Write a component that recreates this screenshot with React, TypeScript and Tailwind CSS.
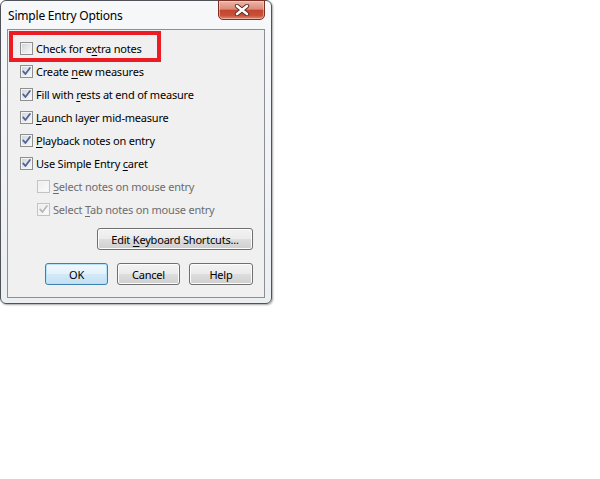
import React, { useId } from 'react';

type BoxProps = { checked?: boolean; disabled?: boolean };

const CheckBox: React.FC<BoxProps> = ({ checked, disabled }) => {
  const id = useId();
  const border = disabled ? '#c3c3c3' : '#8e8f8f';
  const tick = disabled ? '#b8b8b8' : '#4f6496';
  return (
    <svg width="13" height="13" viewBox="0 0 13 13" className="shrink-0">
      <defs>
        <linearGradient id={id} x1="0" y1="0" x2="1" y2="1">
          <stop offset="0" stopColor={disabled ? '#ededed' : '#d2d6dc'} />
          <stop offset="1" stopColor={disabled ? '#fbfbfb' : '#f8f8f8'} />
        </linearGradient>
      </defs>
      <rect x="0.5" y="0.5" width="12" height="12" fill="#f4f4f4" stroke={border} />
      <rect x="2" y="2" width="9" height="9" fill={`url(#${id})`} />
      {checked && (
        <path d="M3.2 6.4 L5.4 9 L9.9 3" fill="none" stroke={tick} strokeWidth="1.8" strokeLinecap="round" strokeLinejoin="round" />
      )}
    </svg>
  );
};

type RowProps = BoxProps & { pre: string; key_: string; post: string; indent?: boolean };

const Row: React.FC<RowProps> = ({ checked, disabled, pre, key_, post, indent }) => (
  <div className={`flex h-[23px] items-center gap-[3px] ${indent ? 'pl-[17px]' : ''}`}>
    <CheckBox checked={checked} disabled={disabled} />
    <span className={`whitespace-nowrap ${disabled ? 'text-[#6d6d6d]' : 'text-black'}`}>
      {pre}
      <u className="underline-offset-[2px]">{key_}</u>
      {post}
    </span>
  </div>
);

const Button: React.FC<{ children: React.ReactNode; def?: boolean; className?: string }> = ({ children, def, className }) => (
  <div
    className={`flex h-[22px] items-center justify-center rounded-[3px] border text-black ${
      def
        ? 'border-[#3c7fb1] bg-[linear-gradient(180deg,#f0f8fd_0%,#e4f2fa_48%,#d3e9f7_52%,#c4e0f3_100%)] shadow-[inset_0_0_0_1px_#b6e3f8]'
        : 'border-[#707070] bg-[linear-gradient(180deg,#f3f3f3_0%,#ebebeb_48%,#dddddd_52%,#cfcfcf_100%)] shadow-[inset_0_0_0_1px_#fcfcfc]'
    } ${className ?? ''}`}
  >
    {children}
  </div>
);

const rows: RowProps[] = [
  { checked: false, pre: 'Check for e', key_: 'x', post: 'tra notes' },
  { checked: true, pre: 'Create ', key_: 'n', post: 'ew measures' },
  { checked: true, pre: 'Fill with ', key_: 'r', post: 'ests at end of measure' },
  { checked: true, pre: '', key_: 'L', post: 'aunch layer mid-measure' },
  { checked: true, pre: '', key_: 'P', post: 'layback notes on entry' },
  { checked: true, pre: 'Use Simple Entry ', key_: 'c', post: 'aret' },
  { checked: false, disabled: true, indent: true, pre: '', key_: 'S', post: 'elect notes on mouse entry' },
  { checked: true, disabled: true, indent: true, pre: 'Select ', key_: 'T', post: 'ab notes on mouse entry' },
];

export default function App() {
  return (
    <div className="h-[479px] w-[600px] bg-white font-['Noto_Sans',sans-serif] text-[11px] leading-none tracking-[-0.2px]">
      <div className="flex h-[304px] w-[272px] flex-col rounded-[6px] border border-[#4f5357] bg-[linear-gradient(180deg,#f6f8fa_0%,#eceff2_100%)] shadow-[1px_1px_2px_rgba(0,0,0,0.35)]">
        {/* title bar */}
        <div className="flex h-[28px] items-start justify-between pr-[6px]">
          <span className="pl-[7px] pt-[9px] text-[12px] text-black">Simple Entry Options</span>
          <div className="-mt-px flex h-[20px] w-[47px] items-center justify-center rounded-b-[5px] border border-[#7c2f22] bg-[linear-gradient(180deg,#eab7aa_0%,#dc8a78_45%,#c4442c_52%,#c9503a_80%,#e08872_100%)] shadow-[inset_0_0_0_1px_rgba(255,220,210,0.5)]">
            <svg width="16" height="12" viewBox="0 0 16 12">
              <path d="M3 2 L13 10 M13 2 L3 10" stroke="#5a2a22" strokeWidth="4.4" strokeLinecap="round" />
              <path d="M3 2 L13 10 M13 2 L3 10" stroke="#ffffff" strokeWidth="2.6" strokeLinecap="round" />
            </svg>
          </div>
        </div>

        {/* client area */}
        <div className="relative mx-[6px] flex h-[269px] flex-col border border-[#8b9096] bg-[#f0f0f0]">
          <div className="pointer-events-none absolute left-[1px] top-[1px] h-[31px] w-[152px] border-[4px] border-[#ec1c24]" />
          <div className="flex flex-col pl-[12px] pt-[7px]">
            {rows.map((r, i) => (
              <Row key={i} {...r} />
            ))}
          </div>
          <div className="mt-[7px] flex justify-end pr-[11px]">
            <Button className="w-[156px]">
              <span>
                Edit <u className="underline-offset-[2px]">K</u>eyboard Shortcuts...
              </span>
            </Button>
          </div>
          <div className="mt-[13px] flex justify-end gap-[9px] pr-[11px]">
            <Button def className="w-[63px]">OK</Button>
            <Button className="w-[63px]">Cancel</Button>
            <Button className="w-[64px]">Help</Button>
          </div>
        </div>
      </div>
    </div>
  );
}
